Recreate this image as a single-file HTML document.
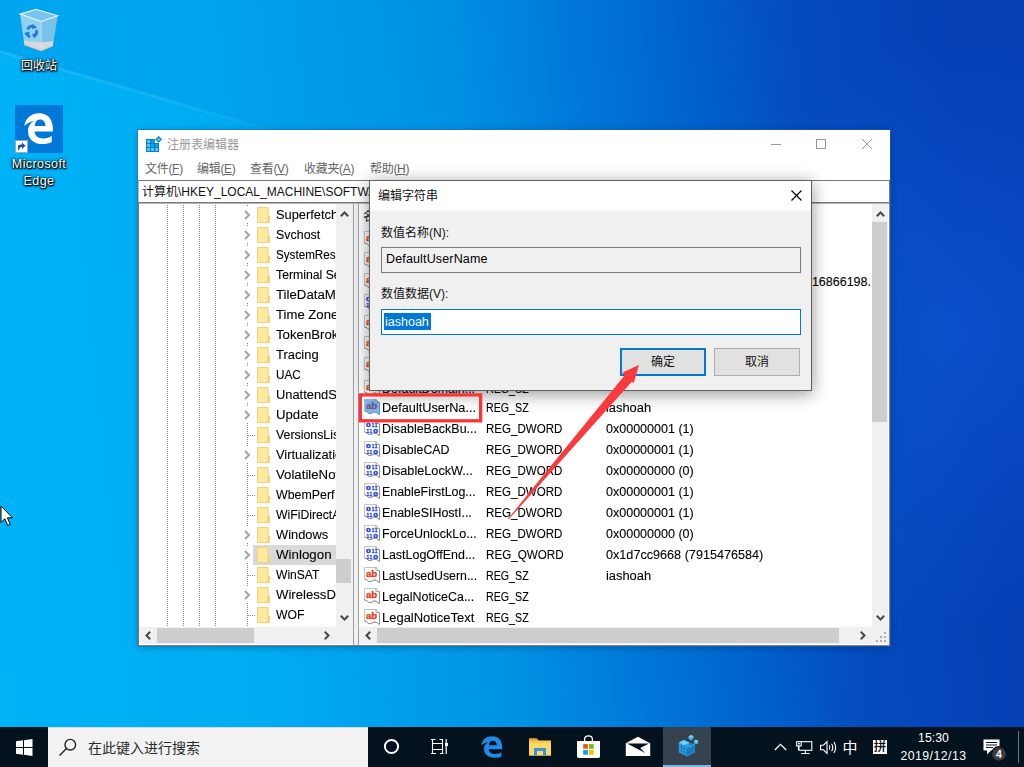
<!DOCTYPE html>
<html lang="zh-CN">
<head>
<meta charset="utf-8">
<title>注册表编辑器</title>
<style>
*{box-sizing:border-box;margin:0;padding:0}
html,body{width:1024px;height:767px;overflow:hidden}
body{position:relative;font-family:"Liberation Sans","Noto Sans CJK SC",sans-serif;font-size:12px;color:#000;
 background:
  radial-gradient(ellipse 230px 300px at 960px 330px,rgba(20,100,235,.36),rgba(20,100,235,0) 100%),
  linear-gradient(84deg,#00b4f8 0%,#00adf3 23.8%,#0093e5 47%,#0078d9 58.6%,#0060cb 70%,#054cbe 78.5%,#0540b5 93%,#0540b5 100%);
}
svg{display:block;overflow:visible}
/* desktop icons */
.dlabel{position:absolute;color:#fff;font-size:12px;text-align:center;line-height:16px;white-space:nowrap;text-shadow:0 1px 2px rgba(0,0,0,1),0 0 3px rgba(0,0,0,.9),1px 1px 1px rgba(0,0,0,.95),0 0 2px rgba(0,0,0,.6)}
/* window */
#win{position:absolute;left:138px;top:130px;width:752px;height:516px;background:#fff;box-shadow:0 0 0 1px rgba(40,110,190,.45),0 1px 7px rgba(0,0,0,.3)}
#title .t{position:absolute;left:29px;top:7px;font-size:12px;line-height:16px;color:#999}
#menu span{position:absolute;top:31px;font-size:12px;line-height:16px;color:#666;white-space:nowrap;letter-spacing:-.3px}
#addr{position:absolute;left:0;top:50px;width:752px;height:23px;background:#fff;border:1px solid #7a7a7a;border-left-color:#bbb}
#addr span{position:absolute;left:3px;top:3px;font-size:12px;line-height:16px;white-space:nowrap;color:#111}
#tree{position:absolute;left:1px;top:73px;width:214px;height:442px;background:#fff;overflow:hidden}
#split{position:absolute;left:215px;top:73px;width:6px;height:443px;background:#f0f0f0;border-left:1px solid #9aa0a6;border-right:1px solid #9aa0a6}
#list{position:absolute;left:221px;top:73px;width:530px;height:442px;background:#fff;overflow:hidden}
.vdot{position:absolute;top:2px;width:1px;height:421px;background:repeating-linear-gradient(to bottom,#8a8a8a 0,#8a8a8a 1px,transparent 1px,transparent 2px)}
.trow{position:absolute;left:0;height:20px;width:197px;white-space:nowrap;overflow:hidden}
.trow .cw{position:absolute;left:102px;top:2px;width:13px;height:16px;background:#fff}
.trow .chev{position:absolute;left:2.500px;top:3px}
.trow .hdot{position:absolute;left:109px;top:10px;width:7px;height:1px;background:repeating-linear-gradient(to right,#8a8a8a 0,#8a8a8a 1px,transparent 1px,transparent 2px)}
.trow .hl{position:absolute;left:114px;top:0;width:83px;height:20px}
.trow .hl.sel{background:#d9d9d9}
.trow .fold{position:absolute;left:118px;top:2px}
.trow .lbl{position:absolute;left:137px;top:2px;font-size:12.500px;line-height:16px;color:#000;display:inline-block;transform-origin:0 0;-webkit-text-stroke:.1px #000}
.lrow{position:absolute;left:0;height:21px;width:511px;white-space:nowrap;font-size:12.500px;line-height:16px;color:#000;-webkit-text-stroke:.1px #000}
.lrow span{position:absolute;top:3px}
.lrow .ico{position:absolute;left:5px;top:2px}
.lrow .c1{left:23px}
.lrow .c2{left:127px}
.lrow .c3{left:247px}
/* scrollbars */
.sb{position:absolute;background:#f0f0f0}
.sb .th{position:absolute;background:#cdcdcd}
.sb svg{position:absolute}
/* dialog */
#dlg{position:absolute;left:369px;top:180px;width:443px;height:211px;background:#f0f0f0;border:1px solid #5f5f5f;box-shadow:0 3px 16px rgba(0,0,0,.42)}
#dlg .tb{position:absolute;left:0;top:0;width:441px;height:30px;background:#fff}
#dlg .in{position:absolute;left:1px;top:0;width:440px;height:209px}
#dlg .lab{position:absolute;font-size:12px;line-height:16px;color:#111;white-space:nowrap}
#dlg .f{position:absolute;left:10px;width:420px;height:26px;font-size:12.500px;line-height:16px}
#dlg .btn{position:absolute;top:167px;width:86px;height:28px;background:#e1e1e1;border:1px solid #adadad;font-size:12px;line-height:16px;text-align:center;padding-top:5px;color:#111}
/* taskbar */
#task{position:absolute;left:0;top:727px;width:1024px;height:40px;background:#04121d}
#task svg{position:absolute}
#task .txt{position:absolute;color:#fff;font-size:12px;line-height:14px;white-space:nowrap}
</style>
</head>
<body>
<div style="position:absolute;left:0;top:0;width:1024px;height:400px;clip-path:polygon(0 0,1024px 0,1024px 348px,0 51px);background:linear-gradient(to right,rgba(0,85,200,.14) 0,rgba(0,85,200,.08) 260px,rgba(0,85,200,0) 540px)"></div>
<div style="position:absolute;left:0;top:50px;width:300px;height:3px;transform-origin:0 0;transform:rotate(16.2deg);background:linear-gradient(to right,rgba(190,235,255,.14),rgba(190,235,255,.09) 60%,rgba(190,235,255,0));filter:blur(.6px)"></div>
<!-- desktop icons -->
<svg style="position:absolute;left:19px;top:8px" width="40" height="44" viewBox="0 0 40 44">
 <path d="M1.100 6.100L17.100 1.200L38.800 7.700L22.300 13.400Z" fill="#8ecaee" fill-opacity=".85"/>
 <path d="M1.100 6.100L22.300 13.400L22.300 42.800L5.400 36.900Z" fill="#b4dcf3" fill-opacity=".8"/>
 <path d="M22.300 13.400L38.800 7.700L33.800 37.900L22.300 42.800Z" fill="#93c8e9" fill-opacity=".82"/>
 <path d="M4.800 32.600L22.300 34.600L34.400 33L33.800 37.900L22.300 42.800L5.400 36.900Z" fill="#d6d9dc"/>
 <path d="M5.400 36.900L22.300 42.800L33.800 37.900" fill="none" stroke="#c9b9ae" stroke-width="1"/>
 <path d="M1.100 6.100L17.100 1.200L38.800 7.700L22.300 13.400Z" fill="none" stroke="#e9f6fd" stroke-width="1.100"/>
 <path d="M22.300 13.400V42" fill="none" stroke="#d4ecf9" stroke-width=".8" stroke-opacity=".8"/>
 <g fill="none" stroke="#1b7dd8" stroke-width="2.800"><path d="M8.600 21.500A5 5 0 0 1 14.800 18.300"/><path d="M17.200 22A5 5 0 0 1 14.600 28.600"/><path d="M11.200 28.800A5 5 0 0 1 7.600 24.600"/></g>
 <g fill="#1b7dd8"><path d="M13.500 15.800L18 19.500L13 21.200Z"/><path d="M19.300 24.500L15.500 30.500L13 26.300Z"/><path d="M5 25.500L10.500 23.500L10 29Z"/></g>
</svg>
<div class="dlabel" style="left:9px;top:58px;width:60px">回收站</div>
<div style="position:absolute;left:15px;top:105px;width:48px;height:48px;background:#0078d7"></div>
<svg style="position:absolute;left:15px;top:105px" width="48" height="48" viewBox="0 0 48 48">
 <path transform="translate(-1.300 -.6) translate(24 24) scale(.92) translate(-24 -24)" d="M9.500 21.500C10.500 12.500 17.500 7.500 25.500 7.500C35.500 7.500 40.500 14.500 40.500 24.500V27.500H20.500C21 32.500 25 35 30 35C33.500 35 36.800 34 39.300 32.300V38.800C36.500 40.300 33 41 29 41C19.500 41 13.500 35.500 13.500 27C13.500 22 16 18 20.500 15.800C17 16.500 12.500 18.500 9.500 21.500ZM20.800 21.500H32.500C32.500 16.500 30 14.200 26.500 14.200C23 14.200 21.200 17.200 20.800 21.500Z" fill="#fff"/>
 <rect x="0.500" y="35.500" width="12" height="12" fill="#fff" stroke="#9ab" stroke-width="1"/>
 <path d="M3 45V41.500Q3 39.500 6 39.500H7V37.500L10.500 40.800L7 44V42H6Q4.500 42 4 45Z" fill="#1b4fa8"/>
</svg>
<div class="dlabel" style="left:4px;top:156px;width:70px;font-size:12.500px;letter-spacing:.4px;line-height:17px">Microsoft<br>Edge</div>
<!-- mouse cursor -->
<svg style="position:absolute;left:-.5px;top:505px" width="14" height="22" viewBox="0 0 14 22"><path d="M1 1V17.500L4.800 13.800L7.800 20.500L10.300 19.400L7.400 12.800H12.500Z" fill="#fff" stroke="#000" stroke-width="1"/></svg>

<div id="win">
 <div id="title">
  <svg style="position:absolute;left:8px;top:6px" width="16" height="17" viewBox="0 0 16 17">
   <path d="M0 3H8.900V7.100H13V16H0Z" fill="#0a7dca"/>
   <g fill="#55d0fd"><rect x="1.200" y="4.050" width="2.800" height="2.800"/><rect x="1.200" y="8.050" width="2.800" height="2.800"/><rect x="1.200" y="12.100" width="2.800" height="2.800"/><rect x="5.100" y="12.100" width="2.800" height="2.800"/><rect x="9.200" y="12.100" width="2.800" height="2.800"/></g>
   <g fill="#0ea6e2"><rect x="5.100" y="4.050" width="2.800" height="2.800"/><rect x="5.100" y="8.050" width="2.800" height="2.800"/><rect x="9.200" y="8.050" width="2.800" height="2.800"/></g>
   <path d="M12.600 .7L15.250 3.350L12.600 6L9.950 3.350Z" fill="#45ccff" stroke="#0a7dca" stroke-width="1.100"/>
  </svg>
  <span class="t">注册表编辑器</span>
  <svg style="position:absolute;left:633px;top:14px" width="11" height="1"><rect width="10" height="1" fill="#999"/></svg>
  <svg style="position:absolute;left:678px;top:9px" width="10" height="10"><rect x=".5" y=".5" width="9" height="9" fill="none" stroke="#999"/></svg>
  <svg style="position:absolute;left:724px;top:9px" width="10" height="10"><path d="M0 0L10 10M10 0L0 10" stroke="#999" stroke-width="1"/></svg>
 </div>
 <div id="menu"><span style="left:7px">文件(<u>F</u>)</span><span style="left:59px">编辑(<u>E</u>)</span><span style="left:112px">查看(<u>V</u>)</span><span style="left:166px">收藏夹(<u>A</u>)</span><span style="left:232px">帮助(<u>H</u>)</span></div>
 <div id="addr"><span>计算机\HKEY_LOCAL_MACHINE\SOFTWARE\Microsoft\Windows NT\CurrentVersion\Winlogon</span></div>
 <div id="tree">
<div class="vdot" style="left:28px"></div>
<div class="vdot" style="left:44px"></div>
<div class="vdot" style="left:60px"></div>
<div class="vdot" style="left:76px"></div>
<div class="vdot" style="left:108px"></div>
<div class="trow" style="top:2px"><span class="cw"><svg class="chev" width="7" height="10" viewBox="0 0 7 10"><path d="M1 1l4 4l-4 4" fill="none" stroke="#a2a2a2" stroke-width="1.900"/></svg></span><span class="hl"></span><svg class="fold" width="14" height="16" viewBox="0 0 14 16"><path d="M.5 .5h10.600v8.700h1.400v6.300h-12z" fill="#ffe8a0" stroke="#f3d071" stroke-width="1"/><path d="M11.100 9.200v6" stroke="#edc65c" stroke-width="1" fill="none"/></svg><span class="lbl" style="transform:scaleX(1.026)">Superfetch</span></div>
<div class="trow" style="top:22px"><span class="cw"><svg class="chev" width="7" height="10" viewBox="0 0 7 10"><path d="M1 1l4 4l-4 4" fill="none" stroke="#a2a2a2" stroke-width="1.900"/></svg></span><span class="hl"></span><svg class="fold" width="14" height="16" viewBox="0 0 14 16"><path d="M.5 .5h10.600v8.700h1.400v6.300h-12z" fill="#ffe8a0" stroke="#f3d071" stroke-width="1"/><path d="M11.100 9.200v6" stroke="#edc65c" stroke-width="1" fill="none"/></svg><span class="lbl" style="transform:scaleX(0.995)">Svchost</span></div>
<div class="trow" style="top:42px"><span class="cw"><svg class="chev" width="7" height="10" viewBox="0 0 7 10"><path d="M1 1l4 4l-4 4" fill="none" stroke="#a2a2a2" stroke-width="1.900"/></svg></span><span class="hl"></span><svg class="fold" width="14" height="16" viewBox="0 0 14 16"><path d="M.5 .5h10.600v8.700h1.400v6.300h-12z" fill="#ffe8a0" stroke="#f3d071" stroke-width="1"/><path d="M11.100 9.200v6" stroke="#edc65c" stroke-width="1" fill="none"/></svg><span class="lbl" style="transform:scaleX(0.932)">SystemResources</span></div>
<div class="trow" style="top:62px"><span class="cw"><svg class="chev" width="7" height="10" viewBox="0 0 7 10"><path d="M1 1l4 4l-4 4" fill="none" stroke="#a2a2a2" stroke-width="1.900"/></svg></span><span class="hl"></span><svg class="fold" width="14" height="16" viewBox="0 0 14 16"><path d="M.5 .5h10.600v8.700h1.400v6.300h-12z" fill="#ffe8a0" stroke="#f3d071" stroke-width="1"/><path d="M11.100 9.200v6" stroke="#edc65c" stroke-width="1" fill="none"/></svg><span class="lbl" style="transform:scaleX(0.980)">Terminal Server</span></div>
<div class="trow" style="top:82px"><span class="cw"><svg class="chev" width="7" height="10" viewBox="0 0 7 10"><path d="M1 1l4 4l-4 4" fill="none" stroke="#a2a2a2" stroke-width="1.900"/></svg></span><span class="hl"></span><svg class="fold" width="14" height="16" viewBox="0 0 14 16"><path d="M.5 .5h10.600v8.700h1.400v6.300h-12z" fill="#ffe8a0" stroke="#f3d071" stroke-width="1"/><path d="M11.100 9.200v6" stroke="#edc65c" stroke-width="1" fill="none"/></svg><span class="lbl" style="transform:scaleX(1.060)">TileDataModel</span></div>
<div class="trow" style="top:102px"><span class="cw"><svg class="chev" width="7" height="10" viewBox="0 0 7 10"><path d="M1 1l4 4l-4 4" fill="none" stroke="#a2a2a2" stroke-width="1.900"/></svg></span><span class="hl"></span><svg class="fold" width="14" height="16" viewBox="0 0 14 16"><path d="M.5 .5h10.600v8.700h1.400v6.300h-12z" fill="#ffe8a0" stroke="#f3d071" stroke-width="1"/><path d="M11.100 9.200v6" stroke="#edc65c" stroke-width="1" fill="none"/></svg><span class="lbl" style="transform:scaleX(1.050)">Time Zones</span></div>
<div class="trow" style="top:122px"><span class="cw"><svg class="chev" width="7" height="10" viewBox="0 0 7 10"><path d="M1 1l4 4l-4 4" fill="none" stroke="#a2a2a2" stroke-width="1.900"/></svg></span><span class="hl"></span><svg class="fold" width="14" height="16" viewBox="0 0 14 16"><path d="M.5 .5h10.600v8.700h1.400v6.300h-12z" fill="#ffe8a0" stroke="#f3d071" stroke-width="1"/><path d="M11.100 9.200v6" stroke="#edc65c" stroke-width="1" fill="none"/></svg><span class="lbl" style="transform:scaleX(1.057)">TokenBroker</span></div>
<div class="trow" style="top:142px"><span class="cw"><svg class="chev" width="7" height="10" viewBox="0 0 7 10"><path d="M1 1l4 4l-4 4" fill="none" stroke="#a2a2a2" stroke-width="1.900"/></svg></span><span class="hl"></span><svg class="fold" width="14" height="16" viewBox="0 0 14 16"><path d="M.5 .5h10.600v8.700h1.400v6.300h-12z" fill="#ffe8a0" stroke="#f3d071" stroke-width="1"/><path d="M11.100 9.200v6" stroke="#edc65c" stroke-width="1" fill="none"/></svg><span class="lbl" style="transform:scaleX(1.034)">Tracing</span></div>
<div class="trow" style="top:162px"><span class="cw"><svg class="chev" width="7" height="10" viewBox="0 0 7 10"><path d="M1 1l4 4l-4 4" fill="none" stroke="#a2a2a2" stroke-width="1.900"/></svg></span><span class="hl"></span><svg class="fold" width="14" height="16" viewBox="0 0 14 16"><path d="M.5 .5h10.600v8.700h1.400v6.300h-12z" fill="#ffe8a0" stroke="#f3d071" stroke-width="1"/><path d="M11.100 9.200v6" stroke="#edc65c" stroke-width="1" fill="none"/></svg><span class="lbl" style="transform:scaleX(0.943)">UAC</span></div>
<div class="trow" style="top:182px"><span class="cw"><svg class="chev" width="7" height="10" viewBox="0 0 7 10"><path d="M1 1l4 4l-4 4" fill="none" stroke="#a2a2a2" stroke-width="1.900"/></svg></span><span class="hl"></span><svg class="fold" width="14" height="16" viewBox="0 0 14 16"><path d="M.5 .5h10.600v8.700h1.400v6.300h-12z" fill="#ffe8a0" stroke="#f3d071" stroke-width="1"/><path d="M11.100 9.200v6" stroke="#edc65c" stroke-width="1" fill="none"/></svg><span class="lbl" style="transform:scaleX(1.030)">UnattendSettings</span></div>
<div class="trow" style="top:202px"><span class="cw"><svg class="chev" width="7" height="10" viewBox="0 0 7 10"><path d="M1 1l4 4l-4 4" fill="none" stroke="#a2a2a2" stroke-width="1.900"/></svg></span><span class="hl"></span><svg class="fold" width="14" height="16" viewBox="0 0 14 16"><path d="M.5 .5h10.600v8.700h1.400v6.300h-12z" fill="#ffe8a0" stroke="#f3d071" stroke-width="1"/><path d="M11.100 9.200v6" stroke="#edc65c" stroke-width="1" fill="none"/></svg><span class="lbl" style="transform:scaleX(1.055)">Update</span></div>
<div class="trow" style="top:222px"><span class="hdot"></span><span class="hl"></span><svg class="fold" width="14" height="16" viewBox="0 0 14 16"><path d="M.5 .5h10.600v8.700h1.400v6.300h-12z" fill="#ffe8a0" stroke="#f3d071" stroke-width="1"/><path d="M11.100 9.200v6" stroke="#edc65c" stroke-width="1" fill="none"/></svg><span class="lbl" style="transform:scaleX(0.987)">VersionsList</span></div>
<div class="trow" style="top:242px"><span class="cw"><svg class="chev" width="7" height="10" viewBox="0 0 7 10"><path d="M1 1l4 4l-4 4" fill="none" stroke="#a2a2a2" stroke-width="1.900"/></svg></span><span class="hl"></span><svg class="fold" width="14" height="16" viewBox="0 0 14 16"><path d="M.5 .5h10.600v8.700h1.400v6.300h-12z" fill="#ffe8a0" stroke="#f3d071" stroke-width="1"/><path d="M11.100 9.200v6" stroke="#edc65c" stroke-width="1" fill="none"/></svg><span class="lbl" style="transform:scaleX(1.027)">Virtualization</span></div>
<div class="trow" style="top:262px"><span class="hdot"></span><span class="hl"></span><svg class="fold" width="14" height="16" viewBox="0 0 14 16"><path d="M.5 .5h10.600v8.700h1.400v6.300h-12z" fill="#ffe8a0" stroke="#f3d071" stroke-width="1"/><path d="M11.100 9.200v6" stroke="#edc65c" stroke-width="1" fill="none"/></svg><span class="lbl" style="transform:scaleX(1.057)">VolatileNotifications</span></div>
<div class="trow" style="top:282px"><span class="hdot"></span><span class="hl"></span><svg class="fold" width="14" height="16" viewBox="0 0 14 16"><path d="M.5 .5h10.600v8.700h1.400v6.300h-12z" fill="#ffe8a0" stroke="#f3d071" stroke-width="1"/><path d="M11.100 9.200v6" stroke="#edc65c" stroke-width="1" fill="none"/></svg><span class="lbl" style="transform:scaleX(0.990)">WbemPerf</span></div>
<div class="trow" style="top:302px"><span class="hdot"></span><span class="hl"></span><svg class="fold" width="14" height="16" viewBox="0 0 14 16"><path d="M.5 .5h10.600v8.700h1.400v6.300h-12z" fill="#ffe8a0" stroke="#f3d071" stroke-width="1"/><path d="M11.100 9.200v6" stroke="#edc65c" stroke-width="1" fill="none"/></svg><span class="lbl" style="transform:scaleX(0.976)">WiFiDirectAPI</span></div>
<div class="trow" style="top:322px"><span class="cw"><svg class="chev" width="7" height="10" viewBox="0 0 7 10"><path d="M1 1l4 4l-4 4" fill="none" stroke="#a2a2a2" stroke-width="1.900"/></svg></span><span class="hl"></span><svg class="fold" width="14" height="16" viewBox="0 0 14 16"><path d="M.5 .5h10.600v8.700h1.400v6.300h-12z" fill="#ffe8a0" stroke="#f3d071" stroke-width="1"/><path d="M11.100 9.200v6" stroke="#edc65c" stroke-width="1" fill="none"/></svg><span class="lbl" style="transform:scaleX(1.028)">Windows</span></div>
<div class="trow" style="top:342px"><span class="cw"><svg class="chev" width="7" height="10" viewBox="0 0 7 10"><path d="M1 1l4 4l-4 4" fill="none" stroke="#a2a2a2" stroke-width="1.900"/></svg></span><span class="hl sel"></span><svg class="fold" width="14" height="16" viewBox="0 0 14 16"><path d="M.5 .5h10.600v8.700h1.400v6.300h-12z" fill="#ffe8a0" stroke="#f3d071" stroke-width="1"/><path d="M11.100 9.200v6" stroke="#edc65c" stroke-width="1" fill="none"/></svg><span class="lbl" style="transform:scaleX(1.067)">Winlogon</span></div>
<div class="trow" style="top:362px"><span class="hdot"></span><span class="hl"></span><svg class="fold" width="14" height="16" viewBox="0 0 14 16"><path d="M.5 .5h10.600v8.700h1.400v6.300h-12z" fill="#ffe8a0" stroke="#f3d071" stroke-width="1"/><path d="M11.100 9.200v6" stroke="#edc65c" stroke-width="1" fill="none"/></svg><span class="lbl" style="transform:scaleX(0.966)">WinSAT</span></div>
<div class="trow" style="top:382px"><span class="cw"><svg class="chev" width="7" height="10" viewBox="0 0 7 10"><path d="M1 1l4 4l-4 4" fill="none" stroke="#a2a2a2" stroke-width="1.900"/></svg></span><span class="hl"></span><svg class="fold" width="14" height="16" viewBox="0 0 14 16"><path d="M.5 .5h10.600v8.700h1.400v6.300h-12z" fill="#ffe8a0" stroke="#f3d071" stroke-width="1"/><path d="M11.100 9.200v6" stroke="#edc65c" stroke-width="1" fill="none"/></svg><span class="lbl" style="transform:scaleX(1.052)">WirelessDocking</span></div>
<div class="trow" style="top:402px"><span class="hdot"></span><span class="hl"></span><svg class="fold" width="14" height="16" viewBox="0 0 14 16"><path d="M.5 .5h10.600v8.700h1.400v6.300h-12z" fill="#ffe8a0" stroke="#f3d071" stroke-width="1"/><path d="M11.100 9.200v6" stroke="#edc65c" stroke-width="1" fill="none"/></svg><span class="lbl" style="transform:scaleX(0.976)">WOF</span></div>
  <div class="sb" style="left:197px;top:0;width:17px;height:424px">
   <svg style="left:4px;top:8px" width="9" height="6" viewBox="0 0 9 6"><path d="M.8 5.200L4.500 1.500L8.200 5.200" fill="none" stroke="#464646" stroke-width="2"/></svg>
   <div class="th" style="left:0;top:356px;width:15px;height:24px"></div>
   <svg style="left:4px;top:412px" width="9" height="6" viewBox="0 0 9 6"><path d="M.8 .8L4.500 4.500L8.200 .8" fill="none" stroke="#464646" stroke-width="2"/></svg>
  </div>
  <div class="sb" style="left:0;top:424px;width:214px;height:17px">
   <svg style="left:6px;top:4px" width="6" height="9" viewBox="0 0 6 9"><path d="M5.200 .8L1.500 4.500L5.200 8.200" fill="none" stroke="#464646" stroke-width="2"/></svg>
   <div class="th" style="left:18px;top:1px;width:97px;height:15px"></div>
   <svg style="left:185px;top:4px" width="6" height="9" viewBox="0 0 6 9"><path d="M.8 .8L4.500 4.500L.8 8.200" fill="none" stroke="#464646" stroke-width="2"/></svg>
  </div>
 </div>
 <div id="split"></div>
 <div id="list">
  <div class="lrow" style="top:3px;color:#333"><span class="c1" style="left:4px;font-size:12px">名称</span></div>
<div class="lrow" style="top:26px"><svg class="ico" width="16" height="16" viewBox="0 0 16 16"><path d="M.5 .5H12L15.500 3.600V15.400C14 15.200 13 13.200 11 13S8 14.600 5.700 14.600S3.500 12 .5 12Z" fill="#fff" stroke="#c4c4c4" stroke-width="1"/><path d="M15.500 3.600V15.400C14 15.200 13 13.200 11 13S8 14.600 5.700 14.600S3.500 12 .5 12" fill="none" stroke="#8e8e8e" stroke-width="1"/><path d="M12 .5V3.600H15.500" fill="none" stroke="#8e8e8e" stroke-width=".8"/><text x="1.900" y="9.800" font-family="Liberation Sans,sans-serif" font-weight="bold" font-size="9.400" fill="#dc401e" stroke="#dc401e" stroke-width=".35" textLength="11.300" lengthAdjust="spacingAndGlyphs">ab</text></svg><span class="c1">(默认)</span><span class="c2" style="display:inline-block;transform-origin:0 0;transform:scaleX(0.8537)">REG_SZ</span><span class="c3">(数值未设置)</span></div>
<div class="lrow" style="top:47px"><svg class="ico" width="16" height="16" viewBox="0 0 16 16"><path d="M.5 .5H12L15.500 3.600V15.400C14 15.200 13 13.200 11 13S8 14.600 5.700 14.600S3.500 12 .5 12Z" fill="#fff" stroke="#c4c4c4" stroke-width="1"/><path d="M15.500 3.600V15.400C14 15.200 13 13.200 11 13S8 14.600 5.700 14.600S3.500 12 .5 12" fill="none" stroke="#8e8e8e" stroke-width="1"/><path d="M12 .5V3.600H15.500" fill="none" stroke="#8e8e8e" stroke-width=".8"/><text x="1.900" y="9.800" font-family="Liberation Sans,sans-serif" font-weight="bold" font-size="9.400" fill="#dc401e" stroke="#dc401e" stroke-width=".35" textLength="11.300" lengthAdjust="spacingAndGlyphs">ab</text></svg><span class="c1">AutoAdminLogon</span><span class="c2" style="display:inline-block;transform-origin:0 0;transform:scaleX(0.8537)">REG_SZ</span><span class="c3">0</span></div>
<div class="lrow" style="top:68px"><svg class="ico" width="16" height="16" viewBox="0 0 16 16"><path d="M.5 .5H12L15.500 3.600V15.400C14 15.200 13 13.200 11 13S8 14.600 5.700 14.600S3.500 12 .5 12Z" fill="#fff" stroke="#c4c4c4" stroke-width="1"/><path d="M15.500 3.600V15.400C14 15.200 13 13.200 11 13S8 14.600 5.700 14.600S3.500 12 .5 12" fill="none" stroke="#8e8e8e" stroke-width="1"/><path d="M12 .5V3.600H15.500" fill="none" stroke="#8e8e8e" stroke-width=".8"/><text x="1.900" y="9.800" font-family="Liberation Sans,sans-serif" font-weight="bold" font-size="9.400" fill="#dc401e" stroke="#dc401e" stroke-width=".35" textLength="11.300" lengthAdjust="spacingAndGlyphs">ab</text></svg><span class="c1">AutoLogonSID</span><span class="c2" style="display:inline-block;transform-origin:0 0;transform:scaleX(0.8537)">REG_SZ</span><span class="c3" style="width:265px;height:16px;overflow:hidden"><span style="left:auto;right:0;top:0">S-1-5-21-3281345016-2416866198.</span></span></div>
<div class="lrow" style="top:89px"><svg class="ico" width="16" height="16" viewBox="0 0 16 16"><path d="M.5 .5H12L15.500 3.600V15.400C14 15.200 13 13.200 11 13S8 14.600 5.700 14.600S3.500 12 .5 12Z" fill="#fff" stroke="#c4c4c4" stroke-width="1"/><path d="M15.500 3.600V15.400C14 15.200 13 13.200 11 13S8 14.600 5.700 14.600S3.500 12 .5 12" fill="none" stroke="#8e8e8e" stroke-width="1"/><path d="M12 .5V3.600H15.500" fill="none" stroke="#8e8e8e" stroke-width=".8"/><text x="2.100" y="6.800" textLength="4.800" font-family="Liberation Sans,sans-serif" font-weight="bold" font-size="6" fill="#1a3de0" stroke="#1a3de0" stroke-width=".32" lengthAdjust="spacingAndGlyphs">0</text><text x="7.700" y="6.800" textLength="2.600" font-family="Liberation Sans,sans-serif" font-weight="bold" font-size="6" fill="#1a3de0" stroke="#1a3de0" stroke-width=".32" lengthAdjust="spacingAndGlyphs">1</text><text x="10.800" y="6.800" textLength="2.600" font-family="Liberation Sans,sans-serif" font-weight="bold" font-size="6" fill="#1a3de0" stroke="#1a3de0" stroke-width=".32" lengthAdjust="spacingAndGlyphs">1</text><text x="2.400" y="12.500" textLength="2.600" font-family="Liberation Sans,sans-serif" font-weight="bold" font-size="6" fill="#1a3de0" stroke="#1a3de0" stroke-width=".32" lengthAdjust="spacingAndGlyphs">1</text><text x="5.600" y="12.500" textLength="2.600" font-family="Liberation Sans,sans-serif" font-weight="bold" font-size="6" fill="#1a3de0" stroke="#1a3de0" stroke-width=".32" lengthAdjust="spacingAndGlyphs">1</text><text x="9.300" y="12.500" textLength="4.800" font-family="Liberation Sans,sans-serif" font-weight="bold" font-size="6" fill="#1a3de0" stroke="#1a3de0" stroke-width=".32" lengthAdjust="spacingAndGlyphs">0</text></svg><span class="c1">AutoRestartShell</span><span class="c2" style="display:inline-block;transform-origin:0 0;transform:scaleX(0.9243)">REG_DWORD</span><span class="c3" style="display:inline-block;transform-origin:0 0;transform:scaleX(1.0014)">0x00000001 (1)</span></div>
<div class="lrow" style="top:110px"><svg class="ico" width="16" height="16" viewBox="0 0 16 16"><path d="M.5 .5H12L15.500 3.600V15.400C14 15.200 13 13.200 11 13S8 14.600 5.700 14.600S3.500 12 .5 12Z" fill="#fff" stroke="#c4c4c4" stroke-width="1"/><path d="M15.500 3.600V15.400C14 15.200 13 13.200 11 13S8 14.600 5.700 14.600S3.500 12 .5 12" fill="none" stroke="#8e8e8e" stroke-width="1"/><path d="M12 .5V3.600H15.500" fill="none" stroke="#8e8e8e" stroke-width=".8"/><text x="1.900" y="9.800" font-family="Liberation Sans,sans-serif" font-weight="bold" font-size="9.400" fill="#dc401e" stroke="#dc401e" stroke-width=".35" textLength="11.300" lengthAdjust="spacingAndGlyphs">ab</text></svg><span class="c1">Background</span><span class="c2" style="display:inline-block;transform-origin:0 0;transform:scaleX(0.8537)">REG_SZ</span><span class="c3">0 0 0</span></div>
<div class="lrow" style="top:131px"><svg class="ico" width="16" height="16" viewBox="0 0 16 16"><path d="M.5 .5H12L15.500 3.600V15.400C14 15.200 13 13.200 11 13S8 14.600 5.700 14.600S3.500 12 .5 12Z" fill="#fff" stroke="#c4c4c4" stroke-width="1"/><path d="M15.500 3.600V15.400C14 15.200 13 13.200 11 13S8 14.600 5.700 14.600S3.500 12 .5 12" fill="none" stroke="#8e8e8e" stroke-width="1"/><path d="M12 .5V3.600H15.500" fill="none" stroke="#8e8e8e" stroke-width=".8"/><text x="1.900" y="9.800" font-family="Liberation Sans,sans-serif" font-weight="bold" font-size="9.400" fill="#dc401e" stroke="#dc401e" stroke-width=".35" textLength="11.300" lengthAdjust="spacingAndGlyphs">ab</text></svg><span class="c1">CachedLogonsCount</span><span class="c2" style="display:inline-block;transform-origin:0 0;transform:scaleX(0.8537)">REG_SZ</span><span class="c3">10</span></div>
<div class="lrow" style="top:152px"><svg class="ico" width="16" height="16" viewBox="0 0 16 16"><path d="M.5 .5H12L15.500 3.600V15.400C14 15.200 13 13.200 11 13S8 14.600 5.700 14.600S3.500 12 .5 12Z" fill="#fff" stroke="#c4c4c4" stroke-width="1"/><path d="M15.500 3.600V15.400C14 15.200 13 13.200 11 13S8 14.600 5.700 14.600S3.500 12 .5 12" fill="none" stroke="#8e8e8e" stroke-width="1"/><path d="M12 .5V3.600H15.500" fill="none" stroke="#8e8e8e" stroke-width=".8"/><text x="1.900" y="9.800" font-family="Liberation Sans,sans-serif" font-weight="bold" font-size="9.400" fill="#dc401e" stroke="#dc401e" stroke-width=".35" textLength="11.300" lengthAdjust="spacingAndGlyphs">ab</text></svg><span class="c1">DebugServerCommand</span><span class="c2" style="display:inline-block;transform-origin:0 0;transform:scaleX(0.8537)">REG_SZ</span><span class="c3">no</span></div>
<div class="lrow" style="top:175px"><svg class="ico" width="16" height="16" viewBox="0 0 16 16"><path d="M.5 .5H12L15.500 3.600V15.400C14 15.200 13 13.200 11 13S8 14.600 5.700 14.600S3.500 12 .5 12Z" fill="#fff" stroke="#c4c4c4" stroke-width="1"/><path d="M15.500 3.600V15.400C14 15.200 13 13.200 11 13S8 14.600 5.700 14.600S3.500 12 .5 12" fill="none" stroke="#8e8e8e" stroke-width="1"/><path d="M12 .5V3.600H15.500" fill="none" stroke="#8e8e8e" stroke-width=".8"/><text x="1.900" y="9.800" font-family="Liberation Sans,sans-serif" font-weight="bold" font-size="9.400" fill="#dc401e" stroke="#dc401e" stroke-width=".35" textLength="11.300" lengthAdjust="spacingAndGlyphs">ab</text></svg><span class="c1">DefaultDomain...</span><span class="c2" style="display:inline-block;transform-origin:0 0;transform:scaleX(0.8537)">REG_SZ</span><span class="c3"></span></div>
<div class="lrow" style="top:194px"><svg class="ico" width="16" height="16" viewBox="0 0 16 16"><path d="M.5 .5H12L15.500 3.600V15.400C14 15.200 13 13.200 11 13S8 14.600 5.700 14.600S3.500 12 .5 12Z" fill="#86b6e8" stroke="#8fb9e6" stroke-width="1"/><path d="M15.500 3.600V15.400C14 15.200 13 13.200 11 13S8 14.600 5.700 14.600S3.500 12 .5 12" fill="none" stroke="#5d95d2" stroke-width="1"/><path d="M12 .5V3.600H15.500" fill="none" stroke="#5d95d2" stroke-width=".8"/><text x="1.900" y="9.800" font-family="Liberation Sans,sans-serif" font-weight="bold" font-size="9.400" fill="#6a5a92" stroke="#6a5a92" stroke-width=".35" textLength="11.300" lengthAdjust="spacingAndGlyphs">ab</text></svg><span class="c1" style="display:inline-block;transform-origin:0 0;transform:scaleX(1.0172)">DefaultUserNa...</span><span class="c2" style="display:inline-block;transform-origin:0 0;transform:scaleX(0.8537)">REG_SZ</span><span class="c3" style="display:inline-block;transform-origin:0 0;transform:scaleX(1.0298)">iashoah</span></div>
<div class="lrow" style="top:215px"><svg class="ico" width="16" height="16" viewBox="0 0 16 16"><path d="M.5 .5H12L15.500 3.600V15.400C14 15.200 13 13.200 11 13S8 14.600 5.700 14.600S3.500 12 .5 12Z" fill="#fff" stroke="#c4c4c4" stroke-width="1"/><path d="M15.500 3.600V15.400C14 15.200 13 13.200 11 13S8 14.600 5.700 14.600S3.500 12 .5 12" fill="none" stroke="#8e8e8e" stroke-width="1"/><path d="M12 .5V3.600H15.500" fill="none" stroke="#8e8e8e" stroke-width=".8"/><text x="2.100" y="6.800" textLength="4.800" font-family="Liberation Sans,sans-serif" font-weight="bold" font-size="6" fill="#1a3de0" stroke="#1a3de0" stroke-width=".32" lengthAdjust="spacingAndGlyphs">0</text><text x="7.700" y="6.800" textLength="2.600" font-family="Liberation Sans,sans-serif" font-weight="bold" font-size="6" fill="#1a3de0" stroke="#1a3de0" stroke-width=".32" lengthAdjust="spacingAndGlyphs">1</text><text x="10.800" y="6.800" textLength="2.600" font-family="Liberation Sans,sans-serif" font-weight="bold" font-size="6" fill="#1a3de0" stroke="#1a3de0" stroke-width=".32" lengthAdjust="spacingAndGlyphs">1</text><text x="2.400" y="12.500" textLength="2.600" font-family="Liberation Sans,sans-serif" font-weight="bold" font-size="6" fill="#1a3de0" stroke="#1a3de0" stroke-width=".32" lengthAdjust="spacingAndGlyphs">1</text><text x="5.600" y="12.500" textLength="2.600" font-family="Liberation Sans,sans-serif" font-weight="bold" font-size="6" fill="#1a3de0" stroke="#1a3de0" stroke-width=".32" lengthAdjust="spacingAndGlyphs">1</text><text x="9.300" y="12.500" textLength="4.800" font-family="Liberation Sans,sans-serif" font-weight="bold" font-size="6" fill="#1a3de0" stroke="#1a3de0" stroke-width=".32" lengthAdjust="spacingAndGlyphs">0</text></svg><span class="c1" style="display:inline-block;transform-origin:0 0;transform:scaleX(0.9980)">DisableBackBu...</span><span class="c2" style="display:inline-block;transform-origin:0 0;transform:scaleX(0.9243)">REG_DWORD</span><span class="c3" style="display:inline-block;transform-origin:0 0;transform:scaleX(1.0014)">0x00000001 (1)</span></div>
<div class="lrow" style="top:236px"><svg class="ico" width="16" height="16" viewBox="0 0 16 16"><path d="M.5 .5H12L15.500 3.600V15.400C14 15.200 13 13.200 11 13S8 14.600 5.700 14.600S3.500 12 .5 12Z" fill="#fff" stroke="#c4c4c4" stroke-width="1"/><path d="M15.500 3.600V15.400C14 15.200 13 13.200 11 13S8 14.600 5.700 14.600S3.500 12 .5 12" fill="none" stroke="#8e8e8e" stroke-width="1"/><path d="M12 .5V3.600H15.500" fill="none" stroke="#8e8e8e" stroke-width=".8"/><text x="2.100" y="6.800" textLength="4.800" font-family="Liberation Sans,sans-serif" font-weight="bold" font-size="6" fill="#1a3de0" stroke="#1a3de0" stroke-width=".32" lengthAdjust="spacingAndGlyphs">0</text><text x="7.700" y="6.800" textLength="2.600" font-family="Liberation Sans,sans-serif" font-weight="bold" font-size="6" fill="#1a3de0" stroke="#1a3de0" stroke-width=".32" lengthAdjust="spacingAndGlyphs">1</text><text x="10.800" y="6.800" textLength="2.600" font-family="Liberation Sans,sans-serif" font-weight="bold" font-size="6" fill="#1a3de0" stroke="#1a3de0" stroke-width=".32" lengthAdjust="spacingAndGlyphs">1</text><text x="2.400" y="12.500" textLength="2.600" font-family="Liberation Sans,sans-serif" font-weight="bold" font-size="6" fill="#1a3de0" stroke="#1a3de0" stroke-width=".32" lengthAdjust="spacingAndGlyphs">1</text><text x="5.600" y="12.500" textLength="2.600" font-family="Liberation Sans,sans-serif" font-weight="bold" font-size="6" fill="#1a3de0" stroke="#1a3de0" stroke-width=".32" lengthAdjust="spacingAndGlyphs">1</text><text x="9.300" y="12.500" textLength="4.800" font-family="Liberation Sans,sans-serif" font-weight="bold" font-size="6" fill="#1a3de0" stroke="#1a3de0" stroke-width=".32" lengthAdjust="spacingAndGlyphs">0</text></svg><span class="c1" style="display:inline-block;transform-origin:0 0;transform:scaleX(0.9927)">DisableCAD</span><span class="c2" style="display:inline-block;transform-origin:0 0;transform:scaleX(0.9243)">REG_DWORD</span><span class="c3" style="display:inline-block;transform-origin:0 0;transform:scaleX(1.0014)">0x00000001 (1)</span></div>
<div class="lrow" style="top:257px"><svg class="ico" width="16" height="16" viewBox="0 0 16 16"><path d="M.5 .5H12L15.500 3.600V15.400C14 15.200 13 13.200 11 13S8 14.600 5.700 14.600S3.500 12 .5 12Z" fill="#fff" stroke="#c4c4c4" stroke-width="1"/><path d="M15.500 3.600V15.400C14 15.200 13 13.200 11 13S8 14.600 5.700 14.600S3.500 12 .5 12" fill="none" stroke="#8e8e8e" stroke-width="1"/><path d="M12 .5V3.600H15.500" fill="none" stroke="#8e8e8e" stroke-width=".8"/><text x="2.100" y="6.800" textLength="4.800" font-family="Liberation Sans,sans-serif" font-weight="bold" font-size="6" fill="#1a3de0" stroke="#1a3de0" stroke-width=".32" lengthAdjust="spacingAndGlyphs">0</text><text x="7.700" y="6.800" textLength="2.600" font-family="Liberation Sans,sans-serif" font-weight="bold" font-size="6" fill="#1a3de0" stroke="#1a3de0" stroke-width=".32" lengthAdjust="spacingAndGlyphs">1</text><text x="10.800" y="6.800" textLength="2.600" font-family="Liberation Sans,sans-serif" font-weight="bold" font-size="6" fill="#1a3de0" stroke="#1a3de0" stroke-width=".32" lengthAdjust="spacingAndGlyphs">1</text><text x="2.400" y="12.500" textLength="2.600" font-family="Liberation Sans,sans-serif" font-weight="bold" font-size="6" fill="#1a3de0" stroke="#1a3de0" stroke-width=".32" lengthAdjust="spacingAndGlyphs">1</text><text x="5.600" y="12.500" textLength="2.600" font-family="Liberation Sans,sans-serif" font-weight="bold" font-size="6" fill="#1a3de0" stroke="#1a3de0" stroke-width=".32" lengthAdjust="spacingAndGlyphs">1</text><text x="9.300" y="12.500" textLength="4.800" font-family="Liberation Sans,sans-serif" font-weight="bold" font-size="6" fill="#1a3de0" stroke="#1a3de0" stroke-width=".32" lengthAdjust="spacingAndGlyphs">0</text></svg><span class="c1" style="display:inline-block;transform-origin:0 0;transform:scaleX(1.0142)">DisableLockW...</span><span class="c2" style="display:inline-block;transform-origin:0 0;transform:scaleX(0.9243)">REG_DWORD</span><span class="c3" style="display:inline-block;transform-origin:0 0;transform:scaleX(1.0014)">0x00000000 (0)</span></div>
<div class="lrow" style="top:278px"><svg class="ico" width="16" height="16" viewBox="0 0 16 16"><path d="M.5 .5H12L15.500 3.600V15.400C14 15.200 13 13.200 11 13S8 14.600 5.700 14.600S3.500 12 .5 12Z" fill="#fff" stroke="#c4c4c4" stroke-width="1"/><path d="M15.500 3.600V15.400C14 15.200 13 13.200 11 13S8 14.600 5.700 14.600S3.500 12 .5 12" fill="none" stroke="#8e8e8e" stroke-width="1"/><path d="M12 .5V3.600H15.500" fill="none" stroke="#8e8e8e" stroke-width=".8"/><text x="2.100" y="6.800" textLength="4.800" font-family="Liberation Sans,sans-serif" font-weight="bold" font-size="6" fill="#1a3de0" stroke="#1a3de0" stroke-width=".32" lengthAdjust="spacingAndGlyphs">0</text><text x="7.700" y="6.800" textLength="2.600" font-family="Liberation Sans,sans-serif" font-weight="bold" font-size="6" fill="#1a3de0" stroke="#1a3de0" stroke-width=".32" lengthAdjust="spacingAndGlyphs">1</text><text x="10.800" y="6.800" textLength="2.600" font-family="Liberation Sans,sans-serif" font-weight="bold" font-size="6" fill="#1a3de0" stroke="#1a3de0" stroke-width=".32" lengthAdjust="spacingAndGlyphs">1</text><text x="2.400" y="12.500" textLength="2.600" font-family="Liberation Sans,sans-serif" font-weight="bold" font-size="6" fill="#1a3de0" stroke="#1a3de0" stroke-width=".32" lengthAdjust="spacingAndGlyphs">1</text><text x="5.600" y="12.500" textLength="2.600" font-family="Liberation Sans,sans-serif" font-weight="bold" font-size="6" fill="#1a3de0" stroke="#1a3de0" stroke-width=".32" lengthAdjust="spacingAndGlyphs">1</text><text x="9.300" y="12.500" textLength="4.800" font-family="Liberation Sans,sans-serif" font-weight="bold" font-size="6" fill="#1a3de0" stroke="#1a3de0" stroke-width=".32" lengthAdjust="spacingAndGlyphs">0</text></svg><span class="c1" style="display:inline-block;transform-origin:0 0;transform:scaleX(0.9915)">EnableFirstLog...</span><span class="c2" style="display:inline-block;transform-origin:0 0;transform:scaleX(0.9243)">REG_DWORD</span><span class="c3" style="display:inline-block;transform-origin:0 0;transform:scaleX(1.0014)">0x00000001 (1)</span></div>
<div class="lrow" style="top:299px"><svg class="ico" width="16" height="16" viewBox="0 0 16 16"><path d="M.5 .5H12L15.500 3.600V15.400C14 15.200 13 13.200 11 13S8 14.600 5.700 14.600S3.500 12 .5 12Z" fill="#fff" stroke="#c4c4c4" stroke-width="1"/><path d="M15.500 3.600V15.400C14 15.200 13 13.200 11 13S8 14.600 5.700 14.600S3.500 12 .5 12" fill="none" stroke="#8e8e8e" stroke-width="1"/><path d="M12 .5V3.600H15.500" fill="none" stroke="#8e8e8e" stroke-width=".8"/><text x="2.100" y="6.800" textLength="4.800" font-family="Liberation Sans,sans-serif" font-weight="bold" font-size="6" fill="#1a3de0" stroke="#1a3de0" stroke-width=".32" lengthAdjust="spacingAndGlyphs">0</text><text x="7.700" y="6.800" textLength="2.600" font-family="Liberation Sans,sans-serif" font-weight="bold" font-size="6" fill="#1a3de0" stroke="#1a3de0" stroke-width=".32" lengthAdjust="spacingAndGlyphs">1</text><text x="10.800" y="6.800" textLength="2.600" font-family="Liberation Sans,sans-serif" font-weight="bold" font-size="6" fill="#1a3de0" stroke="#1a3de0" stroke-width=".32" lengthAdjust="spacingAndGlyphs">1</text><text x="2.400" y="12.500" textLength="2.600" font-family="Liberation Sans,sans-serif" font-weight="bold" font-size="6" fill="#1a3de0" stroke="#1a3de0" stroke-width=".32" lengthAdjust="spacingAndGlyphs">1</text><text x="5.600" y="12.500" textLength="2.600" font-family="Liberation Sans,sans-serif" font-weight="bold" font-size="6" fill="#1a3de0" stroke="#1a3de0" stroke-width=".32" lengthAdjust="spacingAndGlyphs">1</text><text x="9.300" y="12.500" textLength="4.800" font-family="Liberation Sans,sans-serif" font-weight="bold" font-size="6" fill="#1a3de0" stroke="#1a3de0" stroke-width=".32" lengthAdjust="spacingAndGlyphs">0</text></svg><span class="c1" style="display:inline-block;transform-origin:0 0;transform:scaleX(0.9942)">EnableSIHostI...</span><span class="c2" style="display:inline-block;transform-origin:0 0;transform:scaleX(0.9243)">REG_DWORD</span><span class="c3" style="display:inline-block;transform-origin:0 0;transform:scaleX(1.0014)">0x00000001 (1)</span></div>
<div class="lrow" style="top:320px"><svg class="ico" width="16" height="16" viewBox="0 0 16 16"><path d="M.5 .5H12L15.500 3.600V15.400C14 15.200 13 13.200 11 13S8 14.600 5.700 14.600S3.500 12 .5 12Z" fill="#fff" stroke="#c4c4c4" stroke-width="1"/><path d="M15.500 3.600V15.400C14 15.200 13 13.200 11 13S8 14.600 5.700 14.600S3.500 12 .5 12" fill="none" stroke="#8e8e8e" stroke-width="1"/><path d="M12 .5V3.600H15.500" fill="none" stroke="#8e8e8e" stroke-width=".8"/><text x="2.100" y="6.800" textLength="4.800" font-family="Liberation Sans,sans-serif" font-weight="bold" font-size="6" fill="#1a3de0" stroke="#1a3de0" stroke-width=".32" lengthAdjust="spacingAndGlyphs">0</text><text x="7.700" y="6.800" textLength="2.600" font-family="Liberation Sans,sans-serif" font-weight="bold" font-size="6" fill="#1a3de0" stroke="#1a3de0" stroke-width=".32" lengthAdjust="spacingAndGlyphs">1</text><text x="10.800" y="6.800" textLength="2.600" font-family="Liberation Sans,sans-serif" font-weight="bold" font-size="6" fill="#1a3de0" stroke="#1a3de0" stroke-width=".32" lengthAdjust="spacingAndGlyphs">1</text><text x="2.400" y="12.500" textLength="2.600" font-family="Liberation Sans,sans-serif" font-weight="bold" font-size="6" fill="#1a3de0" stroke="#1a3de0" stroke-width=".32" lengthAdjust="spacingAndGlyphs">1</text><text x="5.600" y="12.500" textLength="2.600" font-family="Liberation Sans,sans-serif" font-weight="bold" font-size="6" fill="#1a3de0" stroke="#1a3de0" stroke-width=".32" lengthAdjust="spacingAndGlyphs">1</text><text x="9.300" y="12.500" textLength="4.800" font-family="Liberation Sans,sans-serif" font-weight="bold" font-size="6" fill="#1a3de0" stroke="#1a3de0" stroke-width=".32" lengthAdjust="spacingAndGlyphs">0</text></svg><span class="c1" style="display:inline-block;transform-origin:0 0;transform:scaleX(1.0023)">ForceUnlockLo...</span><span class="c2" style="display:inline-block;transform-origin:0 0;transform:scaleX(0.9243)">REG_DWORD</span><span class="c3" style="display:inline-block;transform-origin:0 0;transform:scaleX(1.0014)">0x00000000 (0)</span></div>
<div class="lrow" style="top:341px"><svg class="ico" width="16" height="16" viewBox="0 0 16 16"><path d="M.5 .5H12L15.500 3.600V15.400C14 15.200 13 13.200 11 13S8 14.600 5.700 14.600S3.500 12 .5 12Z" fill="#fff" stroke="#c4c4c4" stroke-width="1"/><path d="M15.500 3.600V15.400C14 15.200 13 13.200 11 13S8 14.600 5.700 14.600S3.500 12 .5 12" fill="none" stroke="#8e8e8e" stroke-width="1"/><path d="M12 .5V3.600H15.500" fill="none" stroke="#8e8e8e" stroke-width=".8"/><text x="2.100" y="6.800" textLength="4.800" font-family="Liberation Sans,sans-serif" font-weight="bold" font-size="6" fill="#1a3de0" stroke="#1a3de0" stroke-width=".32" lengthAdjust="spacingAndGlyphs">0</text><text x="7.700" y="6.800" textLength="2.600" font-family="Liberation Sans,sans-serif" font-weight="bold" font-size="6" fill="#1a3de0" stroke="#1a3de0" stroke-width=".32" lengthAdjust="spacingAndGlyphs">1</text><text x="10.800" y="6.800" textLength="2.600" font-family="Liberation Sans,sans-serif" font-weight="bold" font-size="6" fill="#1a3de0" stroke="#1a3de0" stroke-width=".32" lengthAdjust="spacingAndGlyphs">1</text><text x="2.400" y="12.500" textLength="2.600" font-family="Liberation Sans,sans-serif" font-weight="bold" font-size="6" fill="#1a3de0" stroke="#1a3de0" stroke-width=".32" lengthAdjust="spacingAndGlyphs">1</text><text x="5.600" y="12.500" textLength="2.600" font-family="Liberation Sans,sans-serif" font-weight="bold" font-size="6" fill="#1a3de0" stroke="#1a3de0" stroke-width=".32" lengthAdjust="spacingAndGlyphs">1</text><text x="9.300" y="12.500" textLength="4.800" font-family="Liberation Sans,sans-serif" font-weight="bold" font-size="6" fill="#1a3de0" stroke="#1a3de0" stroke-width=".32" lengthAdjust="spacingAndGlyphs">0</text></svg><span class="c1" style="display:inline-block;transform-origin:0 0;transform:scaleX(0.9969)">LastLogOffEnd...</span><span class="c2" style="display:inline-block;transform-origin:0 0;transform:scaleX(0.9323)">REG_QWORD</span><span class="c3" style="display:inline-block;transform-origin:0 0;transform:scaleX(1.0104)">0x1d7cc9668 (7915476584)</span></div>
<div class="lrow" style="top:362px"><svg class="ico" width="16" height="16" viewBox="0 0 16 16"><path d="M.5 .5H12L15.500 3.600V15.400C14 15.200 13 13.200 11 13S8 14.600 5.700 14.600S3.500 12 .5 12Z" fill="#fff" stroke="#c4c4c4" stroke-width="1"/><path d="M15.500 3.600V15.400C14 15.200 13 13.200 11 13S8 14.600 5.700 14.600S3.500 12 .5 12" fill="none" stroke="#8e8e8e" stroke-width="1"/><path d="M12 .5V3.600H15.500" fill="none" stroke="#8e8e8e" stroke-width=".8"/><text x="1.900" y="9.800" font-family="Liberation Sans,sans-serif" font-weight="bold" font-size="9.400" fill="#dc401e" stroke="#dc401e" stroke-width=".35" textLength="11.300" lengthAdjust="spacingAndGlyphs">ab</text></svg><span class="c1" style="display:inline-block;transform-origin:0 0;transform:scaleX(0.9857)">LastUsedUsern...</span><span class="c2" style="display:inline-block;transform-origin:0 0;transform:scaleX(0.8537)">REG_SZ</span><span class="c3" style="display:inline-block;transform-origin:0 0;transform:scaleX(1.0298)">iashoah</span></div>
<div class="lrow" style="top:383px"><svg class="ico" width="16" height="16" viewBox="0 0 16 16"><path d="M.5 .5H12L15.500 3.600V15.400C14 15.200 13 13.200 11 13S8 14.600 5.700 14.600S3.500 12 .5 12Z" fill="#fff" stroke="#c4c4c4" stroke-width="1"/><path d="M15.500 3.600V15.400C14 15.200 13 13.200 11 13S8 14.600 5.700 14.600S3.500 12 .5 12" fill="none" stroke="#8e8e8e" stroke-width="1"/><path d="M12 .5V3.600H15.500" fill="none" stroke="#8e8e8e" stroke-width=".8"/><text x="1.900" y="9.800" font-family="Liberation Sans,sans-serif" font-weight="bold" font-size="9.400" fill="#dc401e" stroke="#dc401e" stroke-width=".35" textLength="11.300" lengthAdjust="spacingAndGlyphs">ab</text></svg><span class="c1" style="display:inline-block;transform-origin:0 0;transform:scaleX(0.9987)">LegalNoticeCa...</span><span class="c2" style="display:inline-block;transform-origin:0 0;transform:scaleX(0.8537)">REG_SZ</span><span class="c3"></span></div>
<div class="lrow" style="top:404px"><svg class="ico" width="16" height="16" viewBox="0 0 16 16"><path d="M.5 .5H12L15.500 3.600V15.400C14 15.200 13 13.200 11 13S8 14.600 5.700 14.600S3.500 12 .5 12Z" fill="#fff" stroke="#c4c4c4" stroke-width="1"/><path d="M15.500 3.600V15.400C14 15.200 13 13.200 11 13S8 14.600 5.700 14.600S3.500 12 .5 12" fill="none" stroke="#8e8e8e" stroke-width="1"/><path d="M12 .5V3.600H15.500" fill="none" stroke="#8e8e8e" stroke-width=".8"/><text x="1.900" y="9.800" font-family="Liberation Sans,sans-serif" font-weight="bold" font-size="9.400" fill="#dc401e" stroke="#dc401e" stroke-width=".35" textLength="11.300" lengthAdjust="spacingAndGlyphs">ab</text></svg><span class="c1" style="display:inline-block;transform-origin:0 0;transform:scaleX(1.0376)">LegalNoticeText</span><span class="c2" style="display:inline-block;transform-origin:0 0;transform:scaleX(0.8537)">REG_SZ</span><span class="c3"></span></div>
  <div class="sb" style="left:513px;top:0;width:16px;height:424px">
   <svg style="left:4px;top:8px" width="9" height="6" viewBox="0 0 9 6"><path d="M.8 5.200L4.500 1.500L8.200 5.200" fill="none" stroke="#464646" stroke-width="2"/></svg>
   <div class="th" style="left:0;top:19px;width:15px;height:200px"></div>
   <svg style="left:4px;top:412px" width="9" height="6" viewBox="0 0 9 6"><path d="M.8 .8L4.500 4.500L8.200 .8" fill="none" stroke="#464646" stroke-width="2"/></svg>
  </div>
  <div class="sb" style="left:0;top:424px;width:530px;height:17px">
   <svg style="left:6px;top:4px" width="6" height="9" viewBox="0 0 6 9"><path d="M5.200 .8L1.500 4.500L5.200 8.200" fill="none" stroke="#464646" stroke-width="2"/></svg>
   <div class="th" style="left:18px;top:1px;width:462px;height:15px"></div>
   <svg style="left:501px;top:4px" width="6" height="9" viewBox="0 0 6 9"><path d="M.8 .8L4.500 4.500L.8 8.200" fill="none" stroke="#464646" stroke-width="2"/></svg>
   <svg style="left:517px;top:5px" width="11" height="11" viewBox="0 0 11 11"><g fill="#b0b0b0"><rect x="8" y="0" width="2" height="2"/><rect x="4" y="4" width="2" height="2"/><rect x="8" y="4" width="2" height="2"/><rect x="0" y="8" width="2" height="2"/><rect x="4" y="8" width="2" height="2"/><rect x="8" y="8" width="2" height="2"/></g></svg>
  </div>
 </div>
 <div style="position:absolute;left:0;top:73px;width:752px;height:1px;background:#b4b4b4"></div>
 <div style="position:absolute;left:751px;top:73px;width:1px;height:443px;background:#808488"></div>
 <div style="position:absolute;left:0;top:73px;width:1px;height:443px;background:#74787c"></div>
 <div style="position:absolute;left:0;top:515px;width:752px;height:1px;background:#7c8084"></div>
</div>


<div id="dlg">
 <div class="tb">
  <span class="lab" style="left:8px;top:7px">编辑字符串</span>
  <svg style="position:absolute;left:421px;top:9px" width="11" height="11" viewBox="0 0 11 11"><path d="M.5 .5L10.500 10.500M10.500 .5L.5 10.500" stroke="#000" stroke-width="1.200"/></svg>
 </div>
 <div class="in">
 <span class="lab" style="left:10px;top:44px">数值名称(N):</span>
 <div class="f" style="top:66px;border:1px solid #7a7a7a;background:#f0f0f0"><span style="position:absolute;left:4px;top:3px;letter-spacing:.15px">DefaultUserName</span></div>
 <span class="lab" style="left:10px;top:105px">数值数据(V):</span>
 <div class="f" style="top:128px;height:26px;border:1px solid #0078d7;background:#fff"><span style="position:absolute;left:2px;top:3px;height:17px;padding:1px 2px 0 1px;background:#0078d7;color:#fff">iashoah</span></div>
 <div class="btn" style="left:249px;border:2px solid #0078d7;padding-top:4px">确定</div>
 <div class="btn" style="left:343px">取消</div>
 </div>
</div>

<!-- red highlight rectangle -->
<svg style="position:absolute;left:350px;top:385px" width="140" height="45" viewBox="350 385 140 45"><rect x="360.350" y="394.900" width="120.300" height="25.900" fill="none" stroke="#fb3537" stroke-width="3.300"/></svg>
<!-- red arrow -->
<svg style="position:absolute;left:500px;top:355px" width="150" height="170" viewBox="500 355 150 170"><path d="M507.900 518.800L624.500 375.600L622.500 372.400L638.900 365L633.800 383L631.800 381.800L508.800 519.300Z" fill="#fa3a3c"/></svg>

<div id="task">
 <!-- start -->
 <svg style="left:16px;top:12px" width="17" height="17" viewBox="0 0 17 17"><path d="M0 2.300L7 1.300V8H0ZM8 1.150L16.500 0V8H8ZM0 9H7V15.700L0 14.700ZM8 9H16.500V17L8 15.850Z" fill="#fff"/></svg>
 <div style="position:absolute;left:48px;top:0;width:320px;height:40px;background:#f2f2f2;border-top:1px solid #d8d8d8"></div>
 <svg style="left:58px;top:10px" width="20" height="20" viewBox="0 0 20 20"><circle cx="12.300" cy="7.700" r="5.300" fill="none" stroke="#222" stroke-width="1.400"/><path d="M8.500 11.500L1.500 18.500" stroke="#222" stroke-width="1.500"/></svg>
 <div class="txt" style="left:88px;top:11px;font-size:14px;line-height:20px;color:#2b2b2b">在此键入进行搜索</div>
 <!-- cortana -->
 <svg style="left:383px;top:11px" width="17" height="17" viewBox="0 0 17 17"><circle cx="8.500" cy="8.500" r="6.600" fill="none" stroke="#fff" stroke-width="2"/></svg>
 <!-- task view -->
 <svg style="left:431px;top:12px" width="18" height="16" viewBox="0 0 18 16"><g fill="none" stroke="#fff" stroke-width="1.100"><path d="M1.500 0V15M11.500 0V15M1.500 4.500H11.500M1.500 10.500H11.500M0 .55H4.500M0 14.450H5M9 14.450H12.500M8.500 .55H12"/></g><g fill="#fff"><rect x="14.600" y="0" width="1.200" height="15"/><rect x="14" y="4" width="3" height="3"/></g></svg>
 <!-- edge -->
 <svg style="left:480.500px;top:8.500px" width="21.500" height="22.500" viewBox="9 7 32 35" preserveAspectRatio="none"><path d="M9.500 21.500C10.500 12.500 17.500 7.500 25.500 7.500C35.500 7.500 40.500 14.500 40.500 24.500V27.500H20.500C21 32.500 25 35 30 35C33.500 35 36.800 34 39.300 32.300V38.800C36.500 40.300 33 41 29 41C19.500 41 13.500 35.500 13.500 27C13.500 22 16 18 20.500 15.800C17 16.500 12.500 18.500 9.500 21.500ZM20.800 21.500H32.500C32.500 16.500 30 14.200 26.500 14.200C23 14.200 21.200 17.200 20.800 21.500Z" fill="#1f8ae8"/></svg>
 <!-- explorer -->
 <svg style="left:528px;top:10px" width="24" height="20" viewBox="0 0 24 20"><path d="M1 1.500H8.500L10.500 3.500H23V18.500H1Z" fill="#f7c948"/><path d="M1 6H23V18.500H1Z" fill="#fbd969"/><path d="M1 1.500H8.500L10.500 3.500H1Z" fill="#e8a824"/><path d="M6 11H18V18.500H15V14H9V18.500H6Z" fill="#3b8fde"/></svg>
 <!-- store -->
 <svg style="left:576px;top:7px" width="25" height="25" viewBox="0 0 25 25"><path d="M8.600 7.500V5.600Q8.600 1.900 12.500 1.900T16.400 5.600V7.500" fill="none" stroke="#fff" stroke-width="1.300"/><path d="M1 7H24V22.200Q24 24 22.200 24H2.800Q1 24 1 22.200Z" fill="#fff"/><rect x="7.200" y="10.100" width="4.700" height="4.700" fill="#f25022"/><rect x="13" y="10.100" width="4.700" height="4.700" fill="#7fba00"/><rect x="7.200" y="16" width="4.700" height="4.700" fill="#00a4ef"/><rect x="13" y="16" width="4.700" height="4.700" fill="#ffb900"/></svg>
 <!-- mail -->
 <svg style="left:625px;top:9px" width="26" height="21" viewBox="0 0 26 21"><path d="M.8 7.200L13 .7L25.200 7.200V20H.8Z" fill="#fff"/><path d="M2 7.400H24L15.200 11.900L20.200 17L2 7.400Z" fill="#05141f"/></svg>
 <!-- regedit (active) -->
 <div style="position:absolute;left:663px;top:0;width:48px;height:40px;background:#36424d"></div>
 <div style="position:absolute;left:663px;top:38px;width:48px;height:2px;background:#76b9ed"></div>
 <svg style="left:677px;top:7px" width="22" height="24" viewBox="0 0 22 24">
  <path d="M1.800 8.500L7 6L12.500 8.700V12.500L18 10V18.500L10 22.500L1.800 18.500Z" fill="#2aa2e6"/>
  <path d="M10 13.500L12.500 12.300V8.700L18 10V18.500L10 22.500Z" fill="#1a84cc"/>
  <path d="M1.800 8.500L7 6L12.500 8.700L10 10L7 11.200Z" fill="#6fd2fa"/>
  <path d="M12.500 12.500L15.500 11L18 10L15 12L12.500 13.500Z" fill="#6fd2fa"/>
  <g stroke="#1570b4" stroke-width=".7" fill="none"><path d="M1.800 12L10 16V22.500M1.800 15.300L10 19.300M4.500 9.800V19.800M7.200 11V21.100M10 16L18 12.200M10 19.300L18 15.400M12.700 12.500V21.200M15.400 11.200V19.900"/></g>
  <path d="M11.500 2.500L14 1L16.500 2.300V4.800L14 6.200L11.500 4.800Z" fill="#45b8f2"/><path d="M11.500 2.500L14 1L16.500 2.300L14 3.600Z" fill="#7fd8fb"/>
  <path d="M17 7L19 5.800L21.200 7V9.200L19 10.400L17 9.200Z" fill="#45b8f2"/><path d="M17 7L19 5.800L21.200 7L19 8.200Z" fill="#7fd8fb"/>
 </svg>
 <!-- tray -->
 <svg style="left:774px;top:16px" width="13" height="8" viewBox="0 0 13 8"><path d="M.8 7L6.500 1.300L12.200 7" fill="none" stroke="#fff" stroke-width="1.300"/></svg>
 <svg style="left:796px;top:13px" width="17" height="15" viewBox="0 0 17 15"><g fill="none" stroke="#fff" stroke-width="1.100"><rect x="3" y="1.700" width="12.800" height="8.600"/><path d="M9.400 10.300V13.500M5.200 13.500H13.600"/><rect x=".6" y="1.700" width="4.600" height="4.200" fill="#04121d"/><path d="M2.400 5.900V9.800"/></g><rect x="2" y="3" width="1.800" height="1.400" fill="#fff"/></svg>
 <svg style="left:820px;top:13px" width="19" height="15" viewBox="0 0 19 15"><g fill="none" stroke="#fff" stroke-width="1.100"><path d="M.6 5.200H3.500L7 1.700V13.300L3.500 9.800H.6Z"/><path d="M9.300 5.300Q10.500 7.500 9.300 9.700M11.600 3.700Q13.800 7.500 11.600 11.300M14 2Q17.200 7.500 14 13"/></g></svg>
 <div class="txt" style="left:842.500px;top:12px;font-size:15px;line-height:18px;font-weight:400">中</div>
 <div style="position:absolute;left:873px;top:13px;width:14px;height:14px;background:#fff"></div>
 <div class="txt" style="left:873px;top:13px;width:14px;text-align:center;font-size:12.500px;line-height:14px;color:#000;font-weight:500">拼</div>
 <div class="txt" style="left:900px;top:4px;width:67px;text-align:center;font-size:12.300px">15:30</div>
 <div class="txt" style="left:900px;top:22px;width:67px;text-align:center;font-size:12.300px;letter-spacing:.45px">2019/12/13</div>
 <svg style="left:983px;top:12px" width="17" height="17" viewBox="0 0 17 17"><path d="M.5 .5H16.500V11.500H8L4 15.500V11.500H.5Z" fill="#fff"/><path d="M3 3.500H14M3 6H14M3 8.500H10" stroke="#05141f" stroke-width="1"/></svg>
 <svg style="left:990.500px;top:18.500px" width="16" height="16" viewBox="0 0 16 16"><circle cx="8" cy="8" r="7.400" fill="#3c3c3c" stroke="#04121d" stroke-width="1.200"/><text x="8" y="11.800" text-anchor="middle" font-family="Liberation Sans,sans-serif" font-size="10.500" font-weight="bold" fill="#fff">4</text></svg>
 <div style="position:absolute;left:1018px;top:4px;width:1px;height:32px;background:#6b7780"></div>
</div>
</body>
</html>
